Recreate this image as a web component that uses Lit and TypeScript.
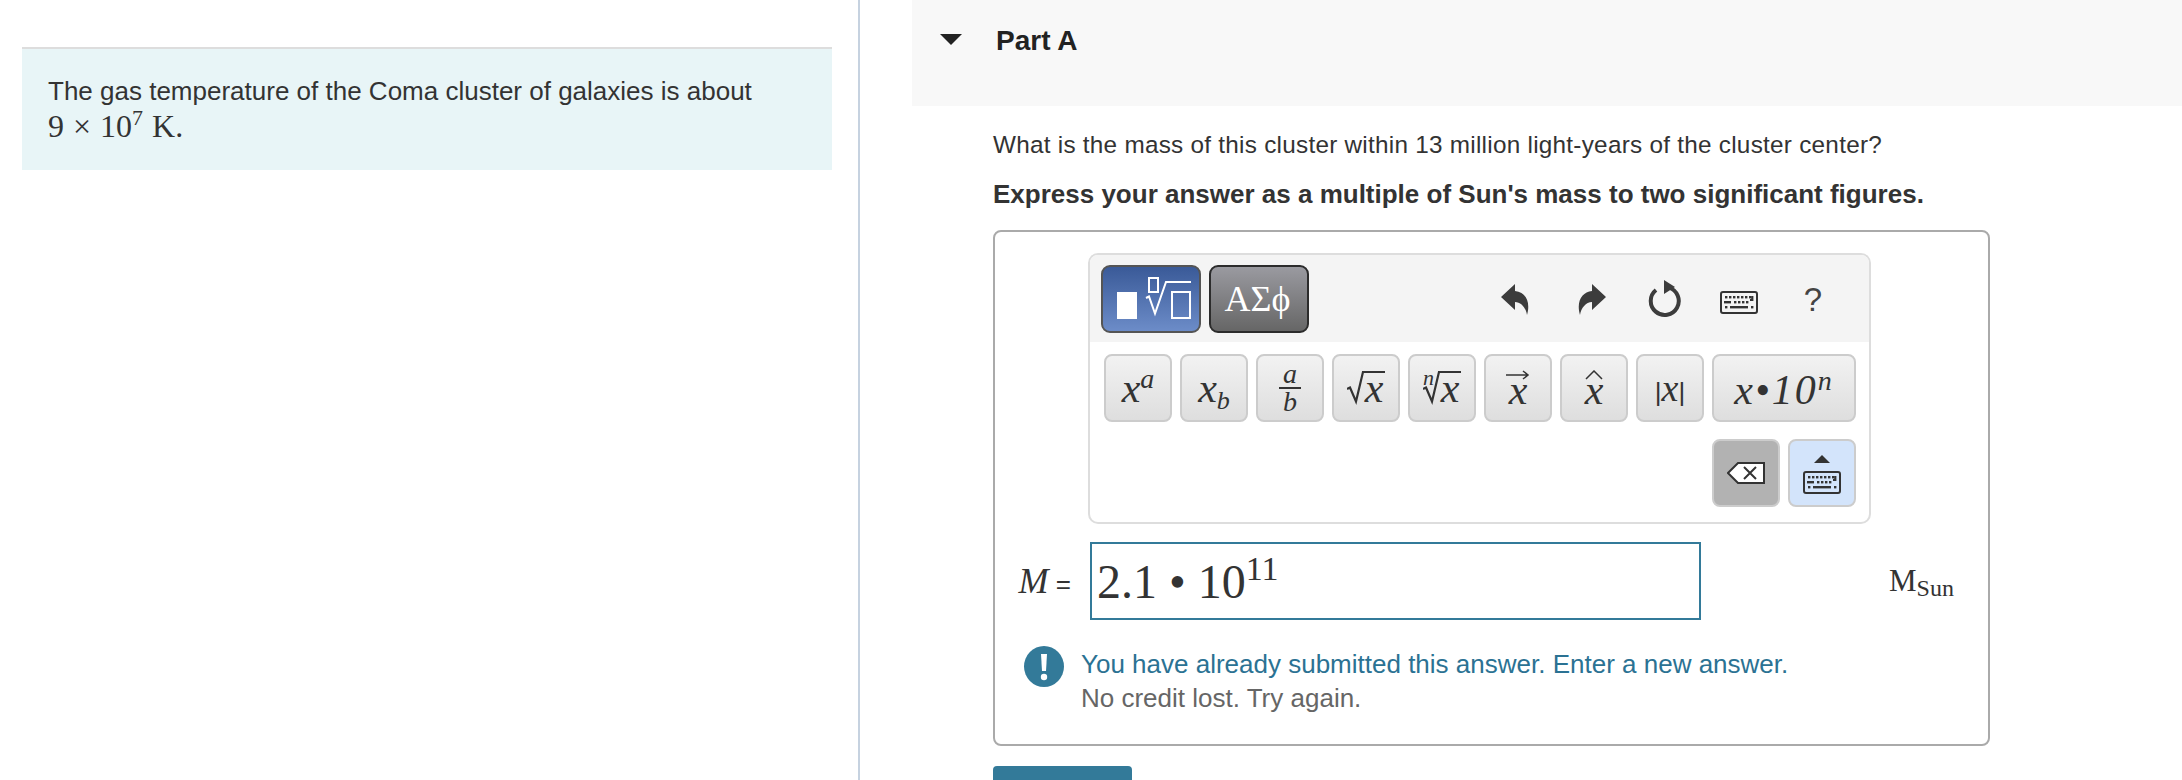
import { LitElement, html, css, svg } from "lit";
import { customElement } from "lit/decorators.js";

const keyboard = (cls: string) => html`<svg class=${cls} viewBox="0 0 38 23" width="38" height="23">
  <rect x="1" y="1" width="36" height="21" rx="2" fill="none" stroke="#333" stroke-width="2"/>
  <g fill="#333">
    ${[5, 9, 13, 17, 21, 25, 29].map((x) => svg`<rect x=${x} y="5" width="2.4" height="2.4"/>`)}
    <rect x="4" y="10" width="7" height="2.4"/>
    ${[14, 18, 22, 26].map((x) => svg`<rect x=${x} y="10" width="2.4" height="2.4"/>`)}
    <path d="M30 10h3.4v-5h-2.2v3H30z"/>
    <rect x="5" y="15" width="2.4" height="2.4"/>
    <rect x="10" y="15" width="18" height="2.4"/>
    <rect x="31" y="15" width="2.4" height="2.4"/>
  </g>
</svg>`;

const radical = html`<svg class="radsvg" viewBox="0 0 17 34" width="17" height="34">
  <path d="M0 18l3-1.500 6 14L16 1h1" fill="none" stroke="#333" stroke-width="2.200"/>
</svg>`;

@customElement("app-root")
export class AppRoot extends LitElement {
  static styles = css`
    :host { display: block; width: 2182px; height: 780px; overflow: hidden; background: #fff; color: #333; font-family: "Liberation Sans", Arial, sans-serif; font-size: 26px; }
    .page { display: grid; grid-template-columns: 858px 2px 1fr; height: 780px; }
    .left { padding: 47px 0 0 22px; }
    .intro { width: 810px; height: 123px; box-sizing: border-box; border-top: 2px solid #ddd; background: #e8f5f7; padding: 25px 26px 0; line-height: 35px; }
    .m { font-family: "Liberation Serif", serif; font-size: 32px; word-spacing: 1px; }
    .m sup { font-size: 22px; line-height: 0; }
    .rule { background: #c6d2e0; }
    .right { padding-left: 52px; }
    .head { height: 106px; background: #f8f8f8; display: flex; align-items: flex-start; padding: 25px 0 0 28px; box-sizing: border-box; font-weight: bold; color: #222; font-size: 28px; }
    .tri { width: 0; height: 0; border-left: 11px solid transparent; border-right: 11px solid transparent; border-top: 11px solid #222; margin: 9px 34px 0 0; }
    .body { padding: 25px 0 0 81px; }
    p { margin: 0; line-height: 28px; }
    .what { font-size: 24.3px; letter-spacing: 0.26px; }
    .ask { margin-top: 21px; font-weight: bold; }
    .box { margin-top: 22px; width: 997px; height: 516px; box-sizing: border-box; border: 2px solid #aaa; border-radius: 8px; padding: 21px 0 0 0; }
    .tools { margin-left: 93px; width: 783px; height: 271px; box-sizing: border-box; border: 2px solid #ddd; border-radius: 10px; overflow: hidden; }
    .top { height: 87px; box-sizing: border-box; background: #f4f4f4; display: flex; padding: 10px 0 0 11px; gap: 8px; }
    .tab { width: 100px; height: 68px; box-sizing: border-box; border-radius: 9px; display: flex; align-items: center; justify-content: center; color: #fff; }
    .tab.a { background: linear-gradient(#3a5a98, #6c8cc8); border: 2px solid #555; }
    .tab.b { background: linear-gradient(#9a9aa0, #666); border: 2px solid #2c2c2c; font-family: "Liberation Serif", serif; font-size: 36px; padding-right: 3px; }
    .acts { margin-left: auto; display: flex; align-items: center; height: 68px; }
    .undo { margin: 2px 49px 0 0; }
    .redo { margin: 2px 42px 0 0; }
    .reload { margin-right: 36px; }
    .kb { margin: 6px 46px 0 0; }
    .q { font-size: 33px; color: #444; margin-right: 47px; line-height: 1; }
    .keys { padding: 12px 0 0 14px; display: flex; flex-wrap: wrap; gap: 17px 8px; box-sizing: border-box; }
    .key { width: 68px; height: 68px; box-sizing: border-box; border: 2px solid #ccc; border-radius: 8px; background: linear-gradient(#f2f2f2, #dedede); display: flex; align-items: center; justify-content: center; font-family: "Liberation Serif", serif; font-style: italic; font-size: 42px; line-height: 1; position: relative; }
    .key.wide { width: 144px; padding-top: 3px; }
    .key.push { margin-left: 608px; }
    .key.del { background: #b2b2b2; }
    .key.kbd { background: #d3e4fb; flex-direction: column; gap: 8px; padding-top: 3px; }
    .key sup { font-size: 28px; line-height: 0; vertical-align: 14px; }
    .key sub { font-size: 26px; line-height: 0; vertical-align: -7px; }
    .frac { display: flex; flex-direction: column; align-items: center; font-size: 28px; line-height: 26px; }
    .frac i + i { border-top: 2px solid #333; padding: 0 4px; }
    .rad { display: flex; align-items: flex-start; }
    .rad span { border-top: 2px solid #333; line-height: 30px; padding: 0 2px 2px; margin-left: -1px; }
    .radsvg { flex: none; }
    .idx { font-size: 22px; position: absolute; left: 13px; top: 11px; }
    .stack { display: flex; flex-direction: column; align-items: center; line-height: 20px; margin-top: -6px; }
    .absv { font-size: 38px; }
    .absv b { font: 400 26px "Liberation Sans", sans-serif; }
    .sci { letter-spacing: 2px; }
    .tri-up { width: 0; height: 0; border-left: 8px solid transparent; border-right: 8px solid transparent; border-bottom: 8px solid #333; }
    .row { margin-top: 18px; display: grid; grid-template-columns: 95px 611px auto; align-items: center; }
    .lab { justify-self: end; margin-right: 19px; white-space: nowrap; font-size: 26px; }
    .lab i { font-family: "Liberation Serif", serif; font-size: 36px; }
    .input { height: 78px; box-sizing: border-box; border: 2px solid #337a99; padding-left: 5px; font-family: "Liberation Serif", serif; font-size: 48px; line-height: 76px; }
    .input sup { font-size: 34px; line-height: 0; vertical-align: 18px; }
    .unit { margin-left: 188px; font-family: "Liberation Serif", serif; font-size: 31px; }
    .unit sub { font-size: 24px; line-height: 0; vertical-align: -5px; }
    .fb { margin-top: 24px; display: flex; padding-left: 29px; gap: 17px; line-height: 34px; }
    .fb svg { flex: none; margin-top: 2px; }
    .fb .msg { padding-top: 3px; }
    .fb .blue { color: #2b7293; }
    .fb .gray { color: #666; }
    .submit { margin-top: 20px; width: 139px; height: 40px; background: #337a99; border-radius: 4px; }
  `;

  render() {
    return html`<div class="page">
      <div class="left">
        <div class="intro">The gas temperature of the Coma cluster of galaxies is about<br />
          <span class="m">9 × 10<sup>7</sup> K.</span></div>
      </div>
      <div class="rule"></div>
      <div class="right">
        <div class="head"><span class="tri"></span><span>Part A</span></div>
        <div class="body">
          <p class="what">What is the mass of this cluster within 13 million light-years of the cluster center?</p>
          <p class="ask">Express your answer as a multiple of Sun's mass to two significant figures.</p>
          <div class="box">
            <div class="tools">
              <div class="top">
                <div class="tab a">
                  <svg width="96" height="64" viewBox="2 2 96 64">
                    <rect x="16" y="27" width="20" height="27" fill="#fff"/>
                    <rect x="48" y="13" width="9" height="14" fill="none" stroke="#fff" stroke-width="2"/>
                    <path d="M45 33l3-1.500 6 17L65 17h25" fill="none" stroke="#fff" stroke-width="2"/>
                    <rect x="71" y="27" width="18" height="26" fill="none" stroke="#fff" stroke-width="2"/>
                  </svg>
                </div>
                <div class="tab b">ΑΣϕ</div>
                <div class="acts">
                  <svg class="undo" width="28" height="32" viewBox="0 0 28 32"><path d="M0 13L14 0v7c10 1 16 10 12 24-1-7-6-13-12-13v8z" fill="#3c3c3c"/></svg>
                  <svg class="redo" width="28" height="32" viewBox="0 0 28 32"><path d="M28 13L14 0v7C4 8-2 17 2 31c1-7 6-13 12-13v8z" fill="#3c3c3c"/></svg>
                  <svg class="reload" width="36" height="38" viewBox="0 0 36 38"><path d="M21 7.600A14 14 0 1 1 8 10" fill="none" stroke="#3c3c3c" stroke-width="4"/><path d="M16 0l11 7-11 7z" fill="#3c3c3c" /></svg>
                  ${keyboard("kb")}
                  <span class="q">?</span>
                </div>
              </div>
              <div class="keys">
                <div class="key"><span>x<sup>a</sup></span></div>
                <div class="key"><span>x<sub>b</sub></span></div>
                <div class="key"><div class="frac"><i>a</i><i>b</i></div></div>
                <div class="key"><div class="rad">${radical}<span>x</span></div></div>
                <div class="key"><span class="idx">n</span><div class="rad">${radical}<span>x</span></div></div>
                <div class="key"><div class="stack"><svg width="24" height="10" viewBox="0 0 24 10"><path d="M0 5h22M17 1l5 4-5 4" fill="none" stroke="#333" stroke-width="1.500"/></svg><span>x</span></div></div>
                <div class="key"><div class="stack"><svg width="18" height="10" viewBox="0 0 18 10"><path d="M1 9l8-8 8 8" fill="none" stroke="#333" stroke-width="1.500"/></svg><span>x</span></div></div>
                <div class="key absv"><span><b>|</b>x<b>|</b></span></div>
                <div class="key wide sci"><span>x•10<sup>n</sup></span></div>
                <div class="key del push">
                  <svg width="38" height="24" viewBox="0 0 38 24"><path d="M37 2H11L1 12l10 10h26z" fill="#fff" stroke="#333" stroke-width="2"/><path d="M17 6l12 12M29 6L17 18" stroke="#333" stroke-width="2"/></svg>
                </div>
                <div class="key kbd"><span class="tri-up"></span>${keyboard("")}</div>
              </div>
            </div>
            <div class="row">
              <span class="lab"><i>M</i> =</span>
              <div class="input">2.1 • 10<sup>11</sup></div>
              <div class="unit">M<sub>Sun</sub></div>
            </div>
            <div class="fb">
              <svg width="40" height="41" viewBox="0 0 40 41"><ellipse cx="20" cy="20.500" rx="20" ry="20.500" fill="#337a99"/><path d="M17 8h6l-1 17h-4z" fill="#fff"/><circle cx="20" cy="31" r="3.200" fill="#fff"/></svg>
              <div class="msg"><div class="blue">You have already submitted this answer. Enter a new answer.</div><div class="gray">No credit lost. Try again.</div></div>
            </div>
          </div>
          <div class="submit"></div>
        </div>
      </div>
    </div>`;
  }
}
